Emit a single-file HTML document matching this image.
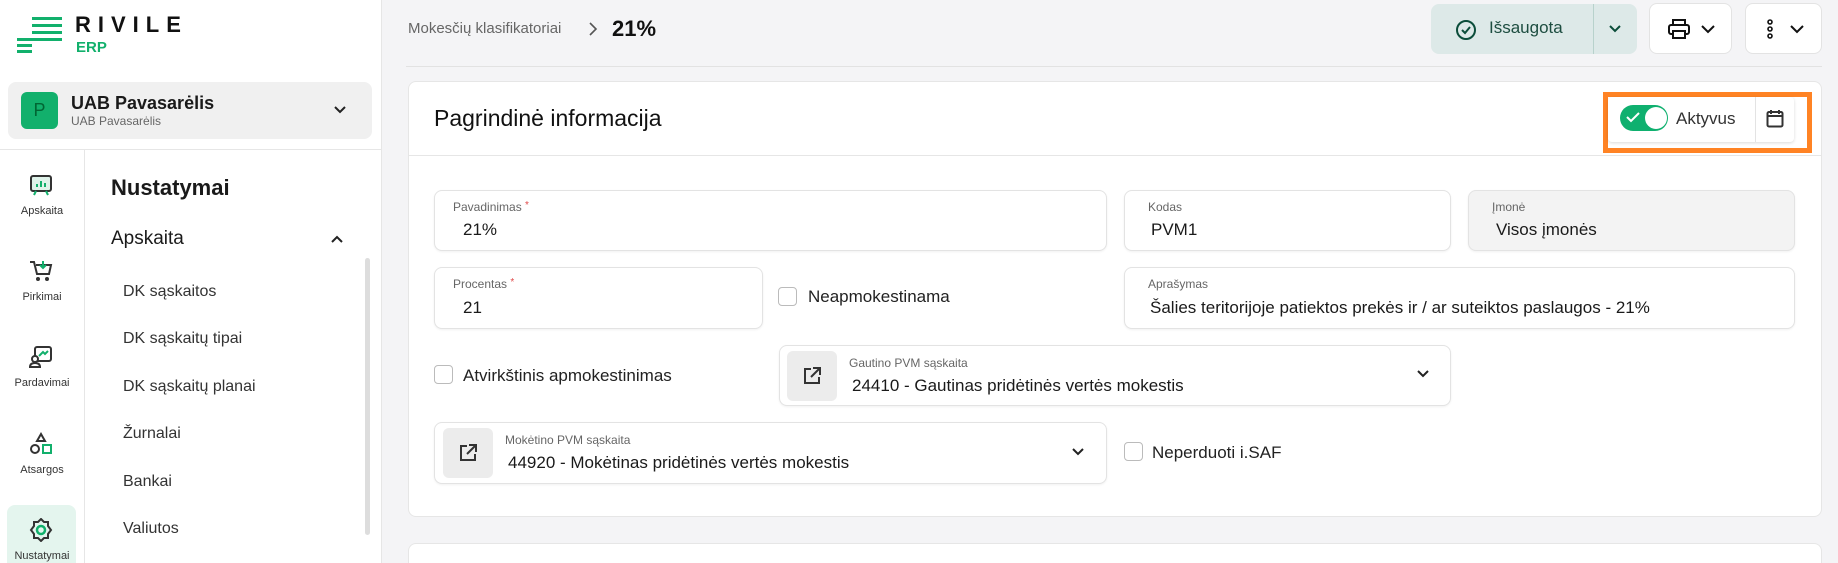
<!DOCTYPE html>
<html style="width:1838px;height:563px;overflow:hidden"><head><meta charset="utf-8"><style>
*{box-sizing:border-box;margin:0;padding:0}
body{width:1838px;height:563px;overflow:hidden;background:#f4f4f6;font-family:"Liberation Sans",sans-serif;color:#1a1a1a;position:relative}
.a{position:absolute}
.side{left:0;top:0;width:382px;height:563px;background:#fff;border-right:1px solid #e6e6e6;overflow:hidden}
.bar{position:absolute;height:3px;background:#12b06c}
.nav{position:absolute;left:0;width:84px;text-align:center;font-size:11px;color:#333}
.item{position:absolute;left:123px;font-size:16px;color:#333}
.field{position:absolute;background:#fff;border:1px solid #e3e3e3;border-radius:8px;box-shadow:0 1px 2px rgba(0,0,0,.06)}
.lbl{position:absolute;font-size:12px;color:#666}
.val{position:absolute;font-size:17px;color:#1a1a1a}
.req{color:#e04a4a;font-size:10px;vertical-align:top}
.cb{position:absolute;width:19px;height:19px;border:1px solid #bbb;border-radius:4px;background:#fff}
.ib{position:absolute;width:50px;height:50px;background:#ececec;border-radius:6px}
.btn{position:absolute;background:#fff;border:1px solid #e3e3e3;border-radius:8px}
</style></head><body>
<div class="a side">
  <div class="bar" style="left:32px;top:17px;width:30px"></div>
  <div class="bar" style="left:32px;top:24px;width:30px"></div>
  <div class="bar" style="left:32px;top:31px;width:30px"></div>
  <div class="bar" style="left:17px;top:38px;width:45px"></div>
  <div class="bar" style="left:17px;top:44px;width:15px"></div>
  <div class="bar" style="left:17px;top:50px;width:15px"></div>
  <div class="a" style="left:75px;top:12px;font-size:22px;font-weight:bold;letter-spacing:7px;color:#111">RIVILE</div>
  <div class="a" style="left:76px;top:39px;font-size:15px;font-weight:bold;color:#12b06c">ERP</div>
  <div class="a" style="left:8px;top:82px;width:364px;height:57px;background:#f0f0f0;border-radius:8px"></div>
  <div class="a" style="left:21px;top:92px;width:37px;height:37px;background:#12b06c;border-radius:6px;color:#063;font-size:18px;text-align:center;line-height:37px">P</div>
  <div class="a" style="left:71px;top:93px;font-size:18px;font-weight:bold">UAB Pavasarėlis</div>
  <div class="a" style="left:71px;top:114px;font-size:12px;color:#666">UAB Pavasarėlis</div>
  <svg class="a" style="left:333px;top:105px" width="14" height="10"><path d="M2 2l5 5 5-5" stroke="#222" stroke-width="2" fill="none"/></svg>
  <div class="a" style="left:0;top:149px;width:382px;height:1px;background:#e6e6e6"></div>
  <div class="a" style="left:84px;top:149px;width:1px;height:414px;background:#e6e6e6"></div>
  <svg class="a" style="left:29px;top:174px" width="24" height="24"><rect x="2" y="2" width="20" height="15" rx="2" stroke="#333" stroke-width="2" fill="#dff3ea"/><path d="M8 13v-3M12 13v-6M16 13v-4M7 17l-2 4M17 17l2 4" stroke="#12b06c" stroke-width="2"/></svg>
  <div class="nav" style="top:205px">Apskaita</div>
  <svg class="a" style="left:29px;top:259px" width="24" height="24"><path d="M1 3h4l3 12h12l2-9H7" stroke="#333" stroke-width="2" fill="none"/><path d="M14 2v7M11 6l3 3 3-3" stroke="#12b06c" stroke-width="2" fill="none"/><circle cx="9" cy="20" r="2" fill="#333"/><circle cx="18" cy="20" r="2" fill="#333"/></svg>
  <div class="nav" style="top:291px">Pirkimai</div>
  <svg class="a" style="left:29px;top:345px" width="24" height="24"><rect x="6" y="2" width="16" height="14" rx="2" stroke="#333" stroke-width="2" fill="none"/><path d="M10 11l4-4 2 2 3-3" stroke="#12b06c" stroke-width="2" fill="none"/><circle cx="6" cy="14" r="3" stroke="#333" stroke-width="2" fill="#fff"/><path d="M1 22c0-3 2-4 5-4s5 1 5 4z" stroke="#333" stroke-width="2" fill="#fff"/></svg>
  <div class="nav" style="top:377px">Pardavimai</div>
  <svg class="a" style="left:29px;top:432px" width="24" height="24"><path d="M12 2l4 7H8z" stroke="#333" stroke-width="2" fill="none"/><circle cx="6" cy="17" r="4" stroke="#333" stroke-width="2" fill="none"/><rect x="14" y="13" width="8" height="8" stroke="#12b06c" stroke-width="2" fill="none"/></svg>
  <div class="nav" style="top:464px">Atsargos</div>
  <div class="a" style="left:7px;top:505px;width:69px;height:80px;background:#e4f5ee;border-radius:8px"></div>
  <svg class="a" style="left:29px;top:518px" width="24" height="24"><path d="M12 1l3 3h4v4l3 4-3 4v4h-4l-3 3-3-3H5v-4l-3-4 3-4V4h4z" stroke="#333" stroke-width="2" fill="none"/><circle cx="12" cy="12" r="4" stroke="#12b06c" stroke-width="2.5" fill="none"/></svg>
  <div class="nav" style="top:550px">Nustatymai</div>
  <div class="a" style="left:111px;top:175px;font-size:22px;font-weight:bold">Nustatymai</div>
  <div class="a" style="left:111px;top:228px;font-size:19px">Apskaita</div>
  <svg class="a" style="left:331px;top:235px" width="12" height="8"><path d="M1 7l5-5 5 5" stroke="#222" stroke-width="2" fill="none"/></svg>
  <div class="a" style="left:365px;top:258px;width:5px;height:277px;background:#ddd;border-radius:3px"></div>
  <div class="item" style="top:283px">DK sąskaitos</div>
  <div class="item" style="top:330px">DK sąskaitų tipai</div>
  <div class="item" style="top:378px">DK sąskaitų planai</div>
  <div class="item" style="top:425px">Žurnalai</div>
  <div class="item" style="top:473px">Bankai</div>
  <div class="item" style="top:520px">Valiutos</div>
</div>

<div class="a" style="left:408px;top:20px;font-size:15px;color:#666">Mokesčių klasifikatoriai</div>
<svg class="a" style="left:588px;top:22px" width="10" height="14"><path d="M2 1l6 6-6 6" stroke="#555" stroke-width="1.6" fill="none"/></svg>
<div class="a" style="left:612px;top:16px;font-size:22px;font-weight:bold;color:#111">21%</div>
<div class="a" style="left:1431px;top:4px;width:206px;height:50px;background:#dde9e8;border-radius:8px"></div>
<div class="a" style="left:1593px;top:4px;width:1px;height:50px;background:#b8d2cc"></div>
<svg class="a" style="left:1455px;top:19px" width="22" height="22"><circle cx="11" cy="11" r="9" stroke="#0b4d3a" stroke-width="2" fill="none"/><path d="M7 11l3 3 5-6" stroke="#0b4d3a" stroke-width="2" fill="none"/></svg>
<div class="a" style="left:1489px;top:18px;font-size:17px;color:#1d4d40">Išsaugota</div>
<svg class="a" style="left:1609px;top:25px" width="12" height="8"><path d="M1 1l5 5 5-5" stroke="#0b4d3a" stroke-width="2" fill="none"/></svg>
<div class="btn" style="left:1649px;top:3px;width:83px;height:51px"></div>
<svg class="a" style="left:1668px;top:19px" width="22" height="20"><rect x="5" y="1" width="12" height="5" stroke="#111" stroke-width="2" fill="none"/><rect x="1" y="6" width="20" height="9" rx="2" stroke="#111" stroke-width="2" fill="none"/><rect x="5" y="12" width="12" height="7" stroke="#111" stroke-width="2" fill="#fff"/></svg>
<svg class="a" style="left:1701px;top:25px" width="14" height="9"><path d="M1 1l6 6 6-6" stroke="#111" stroke-width="2" fill="none"/></svg>
<div class="btn" style="left:1745px;top:3px;width:77px;height:51px"></div>
<svg class="a" style="left:1766px;top:19px" width="8" height="20"><circle cx="4" cy="3" r="2" stroke="#111" stroke-width="1.6" fill="none"/><circle cx="4" cy="10" r="2" stroke="#111" stroke-width="1.6" fill="none"/><circle cx="4" cy="17" r="2" stroke="#111" stroke-width="1.6" fill="none"/></svg>
<svg class="a" style="left:1790px;top:25px" width="14" height="9"><path d="M1 1l6 6 6-6" stroke="#111" stroke-width="2" fill="none"/></svg>
<div class="a" style="left:406px;top:66px;width:1416px;height:1px;background:#e2e2e2"></div>

<div class="a" style="left:408px;top:81px;width:1414px;height:436px;background:#fff;border:1px solid #e6e6e6;border-radius:8px"></div>
<div class="a" style="left:409px;top:155px;width:1412px;height:1px;background:#e6e6e6"></div>
<div class="a" style="left:434px;top:105px;font-size:23px;color:#111">Pagrindinė informacija</div>
<div class="a" style="left:1603px;top:92px;width:209px;height:61px;border:5px solid #ff8324"></div>
<div class="a" style="left:1608px;top:97px;width:186px;height:45px;background:#fff;box-shadow:0 1px 3px rgba(0,0,0,.15);border-radius:4px"></div>
<div class="a" style="left:1755px;top:97px;width:1px;height:45px;background:#e3e3e3"></div>
<div class="a" style="left:1620px;top:105px;width:48px;height:26px;background:#0fb06f;border-radius:13px"></div>
<div class="a" style="left:1645px;top:107px;width:22px;height:22px;background:#fff;border-radius:50%"></div>
<svg class="a" style="left:1626px;top:111px" width="14" height="12"><path d="M1 6l4 4 8-8" stroke="#fff" stroke-width="2" fill="none"/></svg>
<div class="a" style="left:1676px;top:109px;font-size:17px;color:#333">Aktyvus</div>
<svg class="a" style="left:1766px;top:109px" width="18" height="19"><rect x="1.5" y="3" width="15" height="14.5" rx="1.5" stroke="#333" stroke-width="2" fill="none"/><path d="M1.5 7h15M5 1v4M13 1v4" stroke="#333" stroke-width="2"/></svg>

<div class="field" style="left:434px;top:190px;width:673px;height:61px"></div>
<div class="lbl" style="left:453px;top:200px">Pavadinimas <span class="req">*</span></div>
<div class="val" style="left:463px;top:220px">21%</div>
<div class="field" style="left:1124px;top:190px;width:327px;height:61px"></div>
<div class="lbl" style="left:1148px;top:200px">Kodas</div>
<div class="val" style="left:1151px;top:220px">PVM1</div>
<div class="field" style="left:1468px;top:190px;width:327px;height:61px;background:#f3f3f3"></div>
<div class="lbl" style="left:1492px;top:200px">Įmonė</div>
<div class="val" style="left:1496px;top:220px">Visos įmonės</div>

<div class="field" style="left:434px;top:267px;width:329px;height:62px"></div>
<div class="lbl" style="left:453px;top:277px">Procentas <span class="req">*</span></div>
<div class="val" style="left:463px;top:298px">21</div>
<div class="cb" style="left:778px;top:287px"></div>
<div class="a" style="left:808px;top:287px;font-size:17px;color:#222">Neapmokestinama</div>
<div class="field" style="left:1124px;top:267px;width:671px;height:62px"></div>
<div class="lbl" style="left:1148px;top:277px">Aprašymas</div>
<div class="val" style="left:1150px;top:298px">Šalies teritorijoje patiektos prekės ir / ar suteiktos paslaugos - 21%</div>

<div class="cb" style="left:434px;top:365px"></div>
<div class="a" style="left:463px;top:366px;font-size:17px;color:#222">Atvirkštinis apmokestinimas</div>
<div class="field" style="left:779px;top:345px;width:672px;height:61px"></div>
<div class="ib" style="left:787px;top:351px"></div>
<svg class="a" style="left:802px;top:366px" width="20" height="20"><path d="M9 3H3v14h14v-6M11 2h7v7M18 2l-9 9" stroke="#333" stroke-width="2" fill="none"/></svg>
<div class="lbl" style="left:849px;top:356px">Gautino PVM sąskaita</div>
<div class="val" style="left:852px;top:376px">24410 - Gautinas pridėtinės vertės mokestis</div>
<svg class="a" style="left:1417px;top:370px" width="12" height="8"><path d="M1 1l5 5 5-5" stroke="#222" stroke-width="2" fill="none"/></svg>

<div class="field" style="left:434px;top:422px;width:673px;height:62px"></div>
<div class="ib" style="left:443px;top:428px"></div>
<svg class="a" style="left:458px;top:443px" width="20" height="20"><path d="M9 3H3v14h14v-6M11 2h7v7M18 2l-9 9" stroke="#333" stroke-width="2" fill="none"/></svg>
<div class="lbl" style="left:505px;top:433px">Mokėtino PVM sąskaita</div>
<div class="val" style="left:508px;top:453px">44920 - Mokėtinas pridėtinės vertės mokestis</div>
<svg class="a" style="left:1072px;top:448px" width="12" height="8"><path d="M1 1l5 5 5-5" stroke="#222" stroke-width="2" fill="none"/></svg>
<div class="cb" style="left:1124px;top:442px"></div>
<div class="a" style="left:1152px;top:443px;font-size:17px;color:#222">Neperduoti i.SAF</div>

<div class="a" style="left:408px;top:543px;width:1414px;height:20px;background:#fff;border:1px solid #e6e6e6;border-bottom:none;border-radius:8px 8px 0 0"></div>
</body></html>
